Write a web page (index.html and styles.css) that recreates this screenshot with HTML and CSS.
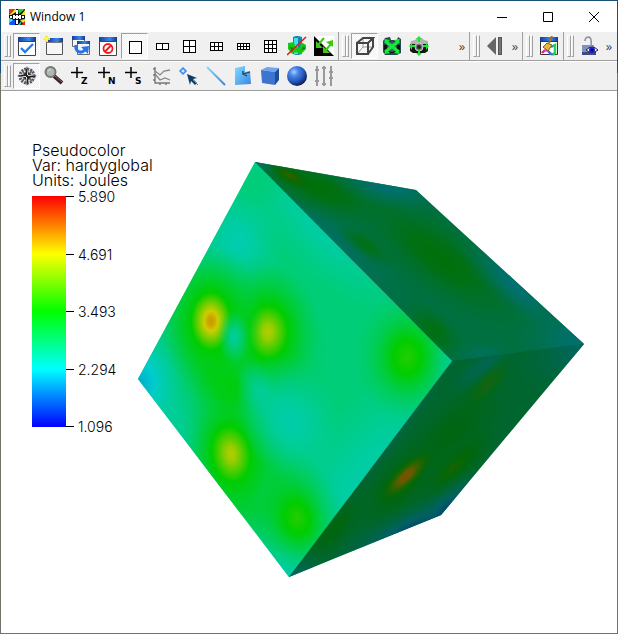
FILE: index.html
```html
<!DOCTYPE html>
<html lang="en">
<head>
<meta charset="utf-8">
<title>Window 1</title>
<link rel="stylesheet" href="styles.css">
</head>
<body>
<div class="window">
  <header class="titlebar">
    <svg class="logo" viewBox="0 0 16 16" aria-hidden="true">
      <path fill="#111" d="M0 0h16v16H0z"/>
      <path fill="#f03020" d="M0 0h6L0 5z"/><path fill="#ffe030" d="M6 0h1v3L2 6H0z"/>
      <path fill="#20d030" d="M9 0h7L10 5z"/><path fill="#ffe030" d="M16 1v5h-4z"/>
      <path fill="#30e0f0" d="M0 9l5 2-2 5H0z"/><path fill="#1050ff" d="M0 14l6-4v6H1z"/>
      <path fill="#ffe030" d="M11 11l5-1v6z"/><path fill="#30e0f0" d="M9 16l5-6-3 6z"/><path fill="#e02020" d="M12 16l4-4v4z"/>
      <path fill="#fff" d="M7 1h2v4H7zM7 11h2v4H7zM4 6h8v4H4zM1 7h2v2H1zM13 7h2v2h-2z"/>
      <path stroke="#111" stroke-dasharray="2 2" fill="none" d="M4 5.500h8M4 10.500h8M6.500 5v6M9.500 5v6"/>
    </svg>
    <h1 class="title">Window 1</h1>
    <div class="caption">
      <button class="cap" aria-label="Minimize"><svg viewBox="0 0 12 12"><path d="M1 6.500h10"/></svg></button>
      <button class="cap" aria-label="Maximize"><svg viewBox="0 0 12 12"><path d="M1.500 1.500h9v9h-9z"/></svg></button>
      <button class="cap" aria-label="Close"><svg viewBox="0 0 12 12"><path d="M1 1l10 10M11 1L1 11"/></svg></button>
    </div>
  </header>

  <svg class="defs" aria-hidden="true">
    <defs>
      <linearGradient id="bar" x2="1" y2="0"><stop stop-color="#123f9c"/><stop offset=".6" stop-color="#3c86e8"/><stop offset="1" stop-color="#123a86"/></linearGradient>
      <radialGradient id="ball" cx=".35" cy=".3" r=".7"><stop stop-color="#a8d0ff"/><stop offset=".3" stop-color="#4a86e8"/><stop offset=".7" stop-color="#2456b8"/><stop offset="1" stop-color="#0c2458"/></radialGradient>
      <linearGradient id="sky" x2="1" y2="1"><stop stop-color="#7fdcff"/><stop offset="1" stop-color="#3c84e0"/></linearGradient>
      <linearGradient id="rainbow" x2="1" y2="0"><stop stop-color="#f02020"/><stop offset=".3" stop-color="#ff30ff"/><stop offset=".6" stop-color="#3060ff"/><stop offset="1" stop-color="#20e040"/></linearGradient>
    </defs>
  </svg>

  <div class="toolrow">
    <div class="group">
      <span class="handle"></span>
      <button class="tool on" aria-label="Set active window"><svg viewBox="0 0 20 20"><path fill="#fff" stroke="#444" d="M1.500 1.500h17v18h-17z"/><path fill="url(#bar)" d="M1 1h18v4H1z"/><path stroke="#444" d="M1 5.500h18"/><path fill="none" stroke="#1e7cf0" stroke-width="2.400" d="M4 12l4 4 8-8"/></svg></button>
      <button class="tool" aria-label="New window"><svg viewBox="0 0 20 20"><path fill="#f6f6f6" stroke="#555" d="M2.500 3.500h16v15h-16z"/><path fill="url(#bar)" d="M4 2h15v4H4z"/><path stroke="#777" d="M2 6.500h17"/><path stroke="#e8d820" stroke-width="2" d="M2.500 0v6M0 3h6"/><circle cx="2.500" cy="3" r="2" fill="#fff460"/></svg></button>
      <button class="tool" aria-label="Clone window"><svg viewBox="0 0 20 20"><path fill="#f6f6f6" stroke="#666" d="M1.500 1.500h12v9h-12z"/><path fill="url(#bar)" d="M1 0h13v4H1z"/><path fill="#f6f6f6" stroke="#666" d="M6.500 6.500h12v12h-12z"/><path fill="url(#bar)" d="M6 5h13v3H6z"/><path fill="none" stroke="#2674e8" stroke-width="3" d="M5 9c-1 7 5 9 9 5"/><path fill="#2674e8" d="M10 11l8-1-1 8z"/></svg></button>
      <button class="tool" aria-label="Delete window"><svg viewBox="0 0 20 20"><path fill="#fff" stroke="#444" d="M1.500 1.500h17v18h-17z"/><path fill="url(#bar)" d="M1 1h18v4H1z"/><path stroke="#444" d="M1 5.500h18"/><circle cx="10" cy="12.500" r="4.500" fill="none" stroke="#f01818" stroke-width="1.800"/><path stroke="#f01818" stroke-width="1.800" d="M7 15.500l6-6"/></svg></button>
      <button class="tool on" aria-label="Layout 1 by 1"><svg class="grid" viewBox="0 0 20 20"><path d="M4.500 5.500h12v12h-12z"/></svg></button>
      <button class="tool" aria-label="Layout 1 by 2"><svg class="grid" viewBox="0 0 20 20"><path d="M4.500 7.500h12v6h-12zM10.500 7v7"/></svg></button>
      <button class="tool" aria-label="Layout 2 by 2"><svg class="grid" viewBox="0 0 20 20"><path d="M4.500 4.500h12v12h-12zM10.500 4v13M4 10.500h13"/></svg></button>
      <button class="tool" aria-label="Layout 2 by 3"><svg class="grid" viewBox="0 0 20 20"><path d="M4.500 6.500h12v8h-12zM8.500 6v9M12.500 6v9M4 10.500h13"/></svg></button>
      <button class="tool" aria-label="Layout 2 by 4"><svg class="grid" viewBox="0 0 20 20"><path d="M4.500 7.500h12v6h-12zM7.500 7v7M10.500 7v7M13.500 7v7M4 10.500h13"/></svg></button>
      <button class="tool" aria-label="Layout 3 by 3"><svg class="grid" viewBox="0 0 20 20"><path d="M4.500 4.500h12v12h-12zM8.500 4v13M12.500 4v13M4 8.500h13M4 12.500h13"/></svg></button>
      <button class="tool" aria-label="Spin"><svg viewBox="0 0 20 20"><path fill="#1686a8" d="M6 1q4-2 9 0v17q-5 2-9 0z"/><path fill="#3ce0f4" d="M7 2h4v16H7z"/><path fill="#16c816" d="M1 7l6-1 1 4 5 2 1-6 5 3v4l-5 5-5-2-4 2-4-5z"/><path fill="#0a8010" d="M3 11l4 1-2 4zM14 14l3-4 1 3z"/><path stroke="#e81818" stroke-width="1.600" d="M0 19L19 1"/></svg></button>
      <button class="tool" aria-label="Invert background"><svg viewBox="0 0 20 20"><path fill="#fff" d="M0 0h20v20H0z"/><path fill="#000" d="M0 0v20h20z"/><path stroke="#3cc814" stroke-width="2" d="M10 2L4 9M18 7l-7 8"/><path fill="#3cc814" d="M2 5v7h7zM12 6l7-2v7zM9 10v7h7z"/></svg></button>
    </div>
    <div class="group wide">
      <span class="handle"></span>
      <button class="tool on" aria-label="Perspective view"><svg viewBox="0 0 20 20"><path fill="none" stroke="#999" d="M8 2v9h10M8 11l-6 7"/><path fill="none" stroke="#444" stroke-width="2" d="M2 7h11v11H2zM2 7l6-5h10l-5 5M18 2v9l-5 7"/></svg></button>
      <button class="tool" aria-label="Reset view"><svg viewBox="0 0 20 20"><path fill="#244a50" d="M3 2l5-1 1 3h6l1-3 3 2v14l-4 2H3l-2-3V5z"/><path fill="#111" d="M2 9h16v8H2z"/><circle cx="10" cy="11" r="5" fill="#3a605c"/><path stroke="#18e83c" stroke-width="3" d="M3 5l14 11M17 5L3 16"/><path fill="#18e83c" d="M2 3l6 1-4 4zM18 3l-6 1 4 4zM2 18l6-1-4-4zM18 18l-6-1 4-4z"/></svg></button>
      <button class="tool" aria-label="Recenter view"><svg viewBox="0 0 20 20"><path fill="#b0b4b0" d="M2 5l4-1 2-2h5l2 2 4 1v5H1z"/><path fill="#151515" d="M1 8h18v7l-3 2H4l-3-2z"/><circle cx="10" cy="11" r="4" fill="#777" stroke="#ccc"/><circle cx="10" cy="11" r="2" fill="#222"/><path stroke="#18e830" stroke-width="2" d="M10 1v5M10 14v5M1 10h5M14 10h5"/><path fill="#18e830" d="M7 3l3-3 3 3zM7 17l3 3 3-3zM3 7l-3 3 3 4zM17 7l3 3-3 4z"/></svg></button>
      <button class="more" aria-label="More view tools">»</button>
    </div>
    <div class="group">
      <span class="handle"></span>
      <button class="tool" aria-label="Previous frame"><svg viewBox="0 0 20 20"><path fill="#666" d="M10 1v18L1 10z"/><path fill="#555" d="M12 1h4v18h-4z"/><path fill="#747474" d="M13 2h2v16h-2z"/></svg></button>
      <button class="more" aria-label="More animation tools">»</button>
    </div>
    <div class="group">
      <span class="handle"></span>
      <button class="tool" aria-label="Clear plots"><svg viewBox="0 0 20 20"><path fill="#fff" stroke="#333" d="M1.500 1.500h17v17h-17z"/><path fill="url(#bar)" d="M1 1h18v4H1z"/><path stroke="#333" d="M1 5.500h18"/><path fill="none" stroke="url(#rainbow)" stroke-width="2.500" d="M3 17q4-5 7-1t6 1V9l-4 2"/><path stroke="#a07020" stroke-width="2" d="M13 0l-3 7"/><path fill="#e8b840" stroke="#806010" d="M8 7l5 2-4 6-5-4z"/></svg></button>
    </div>
    <div class="group last">
      <span class="handle"></span>
      <button class="tool" aria-label="Lock view"><svg viewBox="0 0 20 20"><path fill="none" stroke="#8a90a8" stroke-width="1.600" d="M5 5q0-4 4-4 3 1 2 9"/><path fill="#8090c0" d="M2 9h12v10H2z"/><path fill="#3c4c80" d="M2 16h14v3H2z"/><path fill="#fff" stroke="#223" d="M6 14q6-6 12 0-6 5-12 0z"/><circle cx="12" cy="14" r="3" fill="#1818e0"/><circle cx="12" cy="14" r="1" fill="#000"/></svg></button>
      <button class="more" aria-label="More lock tools">»</button>
    </div>
  </div>

  <div class="toolrow second">
    <div class="group last">
      <span class="handle"></span>
      <button class="tool on" aria-label="Navigate"><svg viewBox="0 0 20 20"><circle cx="10" cy="10" r="7" fill="#f4f0dc" stroke="#555a70" stroke-width="3" stroke-dasharray="2 1"/><path fill="#555" d="M4 4l6 4 6-4-4 6 4 6-6-4-6 4 4-6z"/><path fill="#222" d="M10 0l2 8 8 2-8 2-2 8-2-8-8-2 8-2z"/><path fill="#fff" d="M10 1l1 8h-1zM10 19l-1-8h1zM1 10l8 1v-1zM19 10l-8-1v1z"/></svg></button>
      <button class="tool" aria-label="Zoom"><svg viewBox="0 0 20 20"><path stroke="#3c2424" stroke-width="4" d="M10 10l8 7"/><path stroke="#8c6060" d="M11 10l7 6"/><circle cx="6.500" cy="6" r="5" fill="#b0b8b4" stroke="#777" stroke-width="2"/><path stroke="#ddd" d="M4 5l3-2"/></svg></button>
      <button class="tool axis" aria-label="Up Z"><svg viewBox="0 0 20 20"><path stroke="#000" stroke-width="1.500" d="M6 1v11M0 6.500h12"/><text x="10" y="18">Z</text></svg></button>
      <button class="tool axis" aria-label="Up N"><svg viewBox="0 0 20 20"><path stroke="#000" stroke-width="1.500" d="M6 1v11M0 6.500h12"/><text x="10" y="18">N</text></svg></button>
      <button class="tool axis" aria-label="Up S"><svg viewBox="0 0 20 20"><path stroke="#000" stroke-width="1.500" d="M6 1v11M0 6.500h12"/><text x="10" y="18">S</text></svg></button>
      <button class="tool" aria-label="Lineout"><svg viewBox="0 0 20 20"><path fill="none" stroke="#777" stroke-width="1.400" d="M3 1v16h15M1 3h2M1 9h2M1 14h2M8 17v2M14 17v2"/><path fill="none" stroke="#888" stroke-width="1.300" d="M3 5l5 4 4-4 6-1M3 8l5 6 5-2 5 2"/></svg></button>
      <button class="tool" aria-label="Pick"><svg viewBox="0 0 20 20"><path fill="#c8e4ff" stroke="#3088e8" stroke-width="1.500" d="M4 2l3 3-3 3-3-3z"/><path fill="#0c3c68" d="M8 8l10 4-4 1 4 4-2 2-4-4-1 4z"/><path stroke="#2c88d8" d="M14 14l5 5"/></svg></button>
      <button class="tool" aria-label="Line tool"><svg viewBox="0 0 20 20"><path stroke="url(#sky)" stroke-width="2" d="M1 1l18 18"/></svg></button>
      <button class="tool" aria-label="Plane tool"><svg viewBox="0 0 20 20"><path fill="url(#sky)" d="M2 2l10-2v6l5-1 1 13-16 1z"/><path fill="none" stroke="#244058" stroke-width="1.300" d="M10 5v3l7-2M10 8l4 2"/></svg></button>
      <button class="tool" aria-label="Box tool"><svg viewBox="0 0 20 20"><path fill="#6ea4f0" d="M1 4l6-3 12 1-4 4z"/><path fill="#3c74d0" d="M1 4l14 2v13L2 17z"/><path fill="#204c98" d="M15 6l4-4v12l-4 5z"/></svg></button>
      <button class="tool" aria-label="Sphere tool"><svg viewBox="0 0 20 20"><circle cx="10" cy="10" r="10" fill="url(#ball)"/></svg></button>
      <button class="tool" aria-label="Axis restriction"><svg viewBox="0 0 20 20"><path stroke="#999" stroke-width="2" d="M3 0v20M10 0v20M17 0v20M1 4h4M1 15h4M8 2h4M8 18h4M15 6h4M15 12h4"/></svg></button>
    </div>
  </div>

  <main class="view">
    <svg class="plot" viewBox="0 0 616 542" preserveAspectRatio="xMinYMin meet" role="img" aria-label="Pseudocolor cube">
      <defs>
        <radialGradient id="cyan"><stop stop-color="#00cdb0"/><stop offset=".3" stop-color="#00cdb0" stop-opacity=".8"/><stop offset="1" stop-color="#00cda0" stop-opacity="0"/></radialGradient>
        <radialGradient id="corner"><stop stop-color="#00a8cd"/><stop offset=".25" stop-color="#00cdcd"/><stop offset=".6" stop-color="#00cda0" stop-opacity=".65"/><stop offset="1" stop-color="#00cd80" stop-opacity="0"/></radialGradient>
        <radialGradient id="green"><stop stop-color="#00cd00"/><stop offset=".35" stop-color="#00cd00" stop-opacity=".9"/><stop offset="1" stop-color="#00cd40" stop-opacity="0"/></radialGradient>
        <radialGradient id="soft"><stop stop-color="#00cd78"/><stop offset="1" stop-color="#00cd78" stop-opacity="0"/></radialGradient>
        <radialGradient id="hot"><stop stop-color="#cd9800"/><stop offset=".07" stop-color="#cda800"/><stop offset=".13" stop-color="#cdcd00"/><stop offset=".38" stop-color="#00cd00"/><stop offset=".5" stop-color="#00cd10" stop-opacity=".8"/><stop offset="1" stop-color="#00cd50" stop-opacity="0"/></radialGradient>
        <radialGradient id="warm"><stop stop-color="#b4cd00"/><stop offset=".1" stop-color="#98cd00"/><stop offset=".38" stop-color="#00cd00"/><stop offset=".5" stop-color="#00cd10" stop-opacity=".8"/><stop offset="1" stop-color="#00cd50" stop-opacity="0"/></radialGradient>
        <radialGradient id="mild"><stop stop-color="#24cd00"/><stop offset=".25" stop-color="#00cd00"/><stop offset=".6" stop-color="#00cd30" stop-opacity=".5"/><stop offset="1" stop-color="#00cd60" stop-opacity="0"/></radialGradient>
        <radialGradient id="dgreen"><stop stop-color="#007008"/><stop offset=".3" stop-color="#007010" stop-opacity=".9"/><stop offset="1" stop-color="#007030" stop-opacity="0"/></radialGradient>
        <radialGradient id="dteal"><stop stop-color="#007074"/><stop offset=".3" stop-color="#00706a" stop-opacity=".85"/><stop offset="1" stop-color="#007050" stop-opacity="0"/></radialGradient>
        <radialGradient id="rgreen"><stop stop-color="#006604"/><stop offset=".3" stop-color="#00660c" stop-opacity=".9"/><stop offset="1" stop-color="#006628" stop-opacity="0"/></radialGradient>
        <radialGradient id="rteal"><stop stop-color="#006660"/><stop offset=".3" stop-color="#006658" stop-opacity=".85"/><stop offset="1" stop-color="#006640" stop-opacity="0"/></radialGradient>
        <radialGradient id="rblue"><stop stop-color="#004070"/><stop offset=".35" stop-color="#006068" stop-opacity=".95"/><stop offset="1" stop-color="#006640" stop-opacity="0"/></radialGradient>
        <radialGradient id="olive"><stop stop-color="#345e00"/><stop offset=".4" stop-color="#106800"/><stop offset="1" stop-color="#006810" stop-opacity="0"/></radialGradient>
        <radialGradient id="ember"><stop stop-color="#804c00"/><stop offset=".2" stop-color="#705800"/><stop offset=".55" stop-color="#206600"/><stop offset="1" stop-color="#006608" stop-opacity="0"/></radialGradient>
        <clipPath id="front"><path d="M255 162L452 361 289 577 138 379z"/></clipPath>
        <clipPath id="top"><path d="M255 162L416 190 584 344 452 361z"/></clipPath>
        <clipPath id="side"><path d="M452 361L584 344 441 515 289 577z"/></clipPath>
      </defs>
      <g transform="translate(-1 -91)">
        <path fill="#006a50" d="M452 360L583 343v2L452 362z"/>
        <g clip-path="url(#front)">
          <path fill="#00cd78" d="M130 150h330v440H130z"/>
          <ellipse cx="325" cy="225" rx="120" ry="50" transform="rotate(45 325 225)" fill="url(#cyan)" opacity=".85"/>
          <ellipse cx="365" cy="476" rx="150" ry="65" transform="rotate(-53 365 476)" fill="url(#cyan)" opacity=".85"/>
          <ellipse cx="238" cy="243" rx="46" ry="60" fill="url(#cyan)"/>
          <ellipse cx="259" cy="183" rx="28" ry="28" fill="url(#soft)"/>
          <ellipse cx="285" cy="570" rx="55" ry="55" fill="url(#cyan)"/>
          <ellipse cx="452" cy="361" rx="32" ry="50" fill="url(#cyan)"/>
          <ellipse cx="232" cy="350" rx="100" ry="100" fill="url(#green)" opacity=".65"/>
          <ellipse cx="252" cy="484" rx="75" ry="70" transform="rotate(45 252 484)" fill="url(#green)" opacity=".6"/>
          <ellipse cx="138" cy="385" rx="66" ry="86" fill="url(#corner)"/>
          <ellipse cx="184" cy="435" rx="42" ry="65" transform="rotate(-35 184 435)" fill="url(#cyan)" opacity=".5"/>
          <ellipse cx="225" cy="380" rx="34" ry="62" transform="rotate(-20 225 380)" fill="url(#green)"/>
          <ellipse cx="268" cy="332" rx="52" ry="70" fill="url(#warm)"/>
          <ellipse cx="211" cy="321" rx="52" ry="76" fill="url(#hot)"/>
          <ellipse cx="234" cy="337" rx="16" ry="27" fill="url(#cyan)" opacity=".9"/>
          <ellipse cx="231" cy="454" rx="50" ry="74" transform="rotate(-8 231 454)" fill="url(#warm)"/>
          <ellipse cx="290" cy="420" rx="50" ry="70" transform="rotate(-28 290 420)" fill="url(#cyan)" opacity=".9"/>
          <ellipse cx="258" cy="390" rx="20" ry="34" transform="rotate(-20 258 390)" fill="url(#cyan)" opacity=".6"/>
          <ellipse cx="297" cy="518" rx="48" ry="64" transform="rotate(-12 297 518)" fill="url(#mild)"/>
          <ellipse cx="407" cy="357" rx="54" ry="68" fill="url(#mild)"/>
        </g>
        <g clip-path="url(#top)">
          <path fill="#007040" d="M250 155h340v215H250z"/>
          <ellipse cx="330" cy="240" rx="120" ry="34" transform="rotate(42 330 240)" fill="url(#dteal)" opacity=".7"/>
          <ellipse cx="318" cy="187" rx="90" ry="30" transform="rotate(22 318 187)" fill="url(#dgreen)"/>
          <ellipse cx="440" cy="258" rx="115" ry="40" transform="rotate(37 440 258)" fill="url(#dgreen)"/>
          <ellipse cx="388" cy="187" rx="64" ry="22" transform="rotate(14 388 187)" fill="url(#dteal)"/>
          <ellipse cx="515" cy="286" rx="80" ry="22" transform="rotate(43 515 286)" fill="url(#dteal)"/>
          <ellipse cx="584" cy="340" rx="75" ry="45" fill="url(#dteal)"/>
          <ellipse cx="366" cy="245" rx="38" ry="13" transform="rotate(35 366 245)" fill="url(#dgreen)" opacity=".8"/>
          <ellipse cx="434" cy="331" rx="42" ry="22" transform="rotate(42 434 331)" fill="url(#dgreen)" opacity=".85"/>
          <ellipse cx="482" cy="354" rx="36" ry="16" fill="url(#dteal)" opacity=".5"/>
          <ellipse cx="290" cy="176" rx="24" ry="9" transform="rotate(28 290 176)" fill="url(#olive)"/>
          <ellipse cx="255" cy="162" rx="22" ry="9" transform="rotate(30 255 162)" fill="url(#dteal)"/>
        </g>
        <g clip-path="url(#side)">
          <path fill="#006630" d="M280 340h310v245H280z"/>
          <ellipse cx="395" cy="420" rx="100" ry="22" transform="rotate(-53 395 420)" fill="url(#rteal)" opacity=".75"/>
          <ellipse cx="448" cy="438" rx="105" ry="40" transform="rotate(-47 448 438)" fill="url(#rgreen)" opacity=".75"/>
          <ellipse cx="482" cy="367" rx="46" ry="14" transform="rotate(-38 482 367)" fill="url(#rteal)" opacity=".75"/>
          <ellipse cx="584" cy="344" rx="75" ry="42" transform="rotate(-30 584 344)" fill="url(#rteal)"/>
          <ellipse cx="335" cy="528" rx="60" ry="22" transform="rotate(-50 335 528)" fill="url(#rgreen)" opacity=".8"/>
          <ellipse cx="402" cy="482" rx="70" ry="32" transform="rotate(-45 402 482)" fill="url(#rgreen)"/>
          <ellipse cx="458" cy="464" rx="62" ry="22" transform="rotate(-43 458 464)" fill="url(#rgreen)"/>
          <ellipse cx="420" cy="526" rx="110" ry="25" transform="rotate(-25 420 526)" fill="url(#rblue)"/>
          <ellipse cx="446" cy="510" rx="58" ry="20" transform="rotate(-48 446 510)" fill="url(#rblue)" opacity=".75"/>
          <ellipse cx="291" cy="577" rx="45" ry="18" transform="rotate(-25 291 577)" fill="url(#rteal)"/>
          <ellipse cx="453" cy="468" rx="28" ry="9" transform="rotate(-42 453 468)" fill="url(#olive)" opacity=".5"/>
          <ellipse cx="488" cy="384" rx="36" ry="13" transform="rotate(-46 488 384)" fill="url(#olive)" opacity=".5"/>
          <ellipse cx="406" cy="476" rx="36" ry="12" transform="rotate(-44 406 476)" fill="url(#ember)"/>
        </g>
      </g>
    </svg>
    <section class="legend">
      <p>Pseudocolor</p>
      <p>Var: hardyglobal</p>
      <p>Units: Joules</p>
      <div class="scale">
        <div class="ramp"></div>
        <ul class="ticks">
          <li>5.890</li><li>4.691</li><li>3.493</li><li>2.294</li><li>1.096</li>
        </ul>
      </div>
    </section>
  </main>
</div>
</body>
</html>
```
FILE: styles.css
```css
* { box-sizing: border-box; }
body { margin: 0; font-family: "Open Sans", "Noto Sans", sans-serif; font-size: 12px; color: #000; }
button { border: 0; padding: 0; background: none; font: inherit; color: inherit; }
svg { display: block; }

.window {
  display: flex;
  flex-direction: column;
  min-height: 100vh;
  padding: 1px;
  background: linear-gradient(#175074 73px, #707468 73px);
}
.defs { width: 0; height: 0; flex: none; position: absolute; }

.titlebar { display: flex; align-items: center; height: 31px; padding-left: 8px; background: #fff; }
.logo { width: 16px; height: 16px; margin-right: 5px; }
.title { margin: 0; font-size: 12px; font-weight: 400; line-height: 16px; }
.caption { display: flex; margin-left: auto; }
.cap { display: flex; align-items: center; justify-content: center; width: 46px; height: 30px; }
.cap svg { width: 12px; height: 12px; fill: none; stroke: #000; }

.toolrow { display: flex; height: 30px; background: #f0f0f0; border-bottom: 1px solid #fff; box-shadow: inset 0 -1px #a0a0a0; }
.second { height: 29px; border-bottom: 0; }
.group { display: flex; align-items: center; padding: 0 1px 1px 3px; border-right: 1px solid #a0a0a0; }
.wide { flex: 1; }
.last { border-right: 0; padding-right: 2px; }
.handle { display: flex; justify-content: space-between; width: 7px; height: 22px; margin-right: 2px; }
.handle::before, .handle::after { content: ""; width: 3px; border: 1px solid; border-color: #fff #a0a0a0 #a0a0a0 #fff; }

.tool { display: flex; align-items: center; justify-content: center; width: 27px; height: 26px; border: 1px solid transparent; }
.tool svg { width: 20px; height: 20px; flex: none; }
.on {
  border-color: #a0a0a0 #fff #fff #a0a0a0;
  background: repeating-conic-gradient(#f0f0f0 0 25%, #fff 0 50%) 0 0 / 2px 2px;
}
.grid { fill: #fff; stroke: #000; shape-rendering: crispEdges; }
.axis text { font: bold 9px "DejaVu Sans", sans-serif; }
.more { width: 12px; color: #444; font-size: 13px; line-height: 16px; text-align: center; }
.wide .more { margin-left: auto; }

.view { flex: 1; display: grid; background: #fff; }
.plot, .legend { grid-area: 1 / 1; }
.plot { width: 100%; }
.legend { padding: 52px 0 0 31px; justify-self: start; font-family: Inter, sans-serif; font-size: 16px; font-weight: 300; line-height: 15px; }
.legend p { margin: 0; }
.scale { display: flex; height: 231px; margin-top: 8px; }
.ramp { width: 34px; background: linear-gradient(#f00, #ff0 25%, #0f0 50%, #0ff 75%, #00f); }
.ticks { display: flex; flex-direction: column; justify-content: space-between; margin: 0; padding: 0; list-style: none; font-size: 14px; }
.ticks li { display: flex; align-items: center; gap: 4px; height: 1px; }
.ticks li::before { content: ""; width: 8px; height: 1px; background: #000; }
```
